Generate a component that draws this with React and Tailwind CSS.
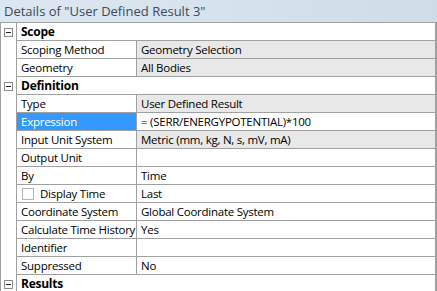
import React from 'react';

const rows = [
  { section: 'Scope' },
  { label: 'Scoping Method', value: 'Geometry Selection', ro: true },
  { label: 'Geometry', value: 'All Bodies', ro: true },
  { section: 'Definition' },
  { label: 'Type', value: 'User Defined Result', ro: true },
  { label: 'Expression', value: '= (SERR/ENERGYPOTENTIAL)*100', selected: true },
  { label: 'Input Unit System', value: 'Metric (mm, kg, N, s, mV, mA)', ro: true },
  { label: 'Output Unit', value: '' },
  { label: 'By', value: 'Time' },
  { label: 'Display Time', value: 'Last', checkbox: true },
  { label: 'Coordinate System', value: 'Global Coordinate System' },
  { label: 'Calculate Time History', value: 'Yes' },
  { label: 'Identifier', value: '' },
  { label: 'Suppressed', value: 'No' },
  { section: 'Results' },
];

const Expander = () => (
  <div className="w-[9px] h-[9px] border border-[#8c8c8c] bg-white flex items-center justify-center">
    <div className="w-[5px] h-px bg-[#222]" />
  </div>
);

const Row = ({ row }) => {
  if (row.section) {
    return (
      <div className="flex h-[18px]">
        <div className="w-[15px] shrink-0 flex items-center justify-center">
          <Expander />
        </div>
        <div className="flex-1 flex items-center pl-[4px] font-bold text-[12px] border-l border-b border-[#a0a0a0] bg-white">
          {row.section}
        </div>
      </div>
    );
  }
  return (
    <div className="flex h-[18px]">
      <div className="w-[15px] shrink-0" />
      <div
        className={`w-[120px] shrink-0 flex items-center pl-[4px] border-l border-b border-[#a0a0a0] whitespace-nowrap overflow-hidden ${
          row.selected ? 'bg-[#3399ff] text-white' : 'bg-white'
        }`}
      >
        {row.checkbox && (
          <span className="w-[12px] h-[12px] border border-[#b5b5b5] bg-white mr-[6px] ml-[1px] shrink-0" />
        )}
        {row.label}
      </div>
      <div
        className={`flex-1 flex items-center pl-[4px] border-l border-b border-[#a0a0a0] whitespace-nowrap overflow-hidden ${
          row.ro ? 'bg-[#e8e8e8]' : 'bg-white'
        }`}
      >
        {row.value}
      </div>
    </div>
  );
};

export default function App() {
  return (
    <div className="w-[437px] h-[291px] overflow-hidden bg-white text-[11.5px] leading-[16px] tracking-[-0.25px] text-black" style={{ fontFamily: '"Open Sans", "Noto Sans", sans-serif' }}>
      <div className="h-[22px] flex items-center pl-[4px] bg-gradient-to-r from-[#dde7f1] to-[#cfdde9] text-[#3c4a58] text-[13px] tracking-normal">
        Details of "User Defined Result 3"
      </div>
      <div className="border-t border-l border-r-2 border-[#a0a0a0]">
        {rows.map((r, i) => (
          <Row key={i} row={r} />
        ))}
      </div>
    </div>
  );
}
